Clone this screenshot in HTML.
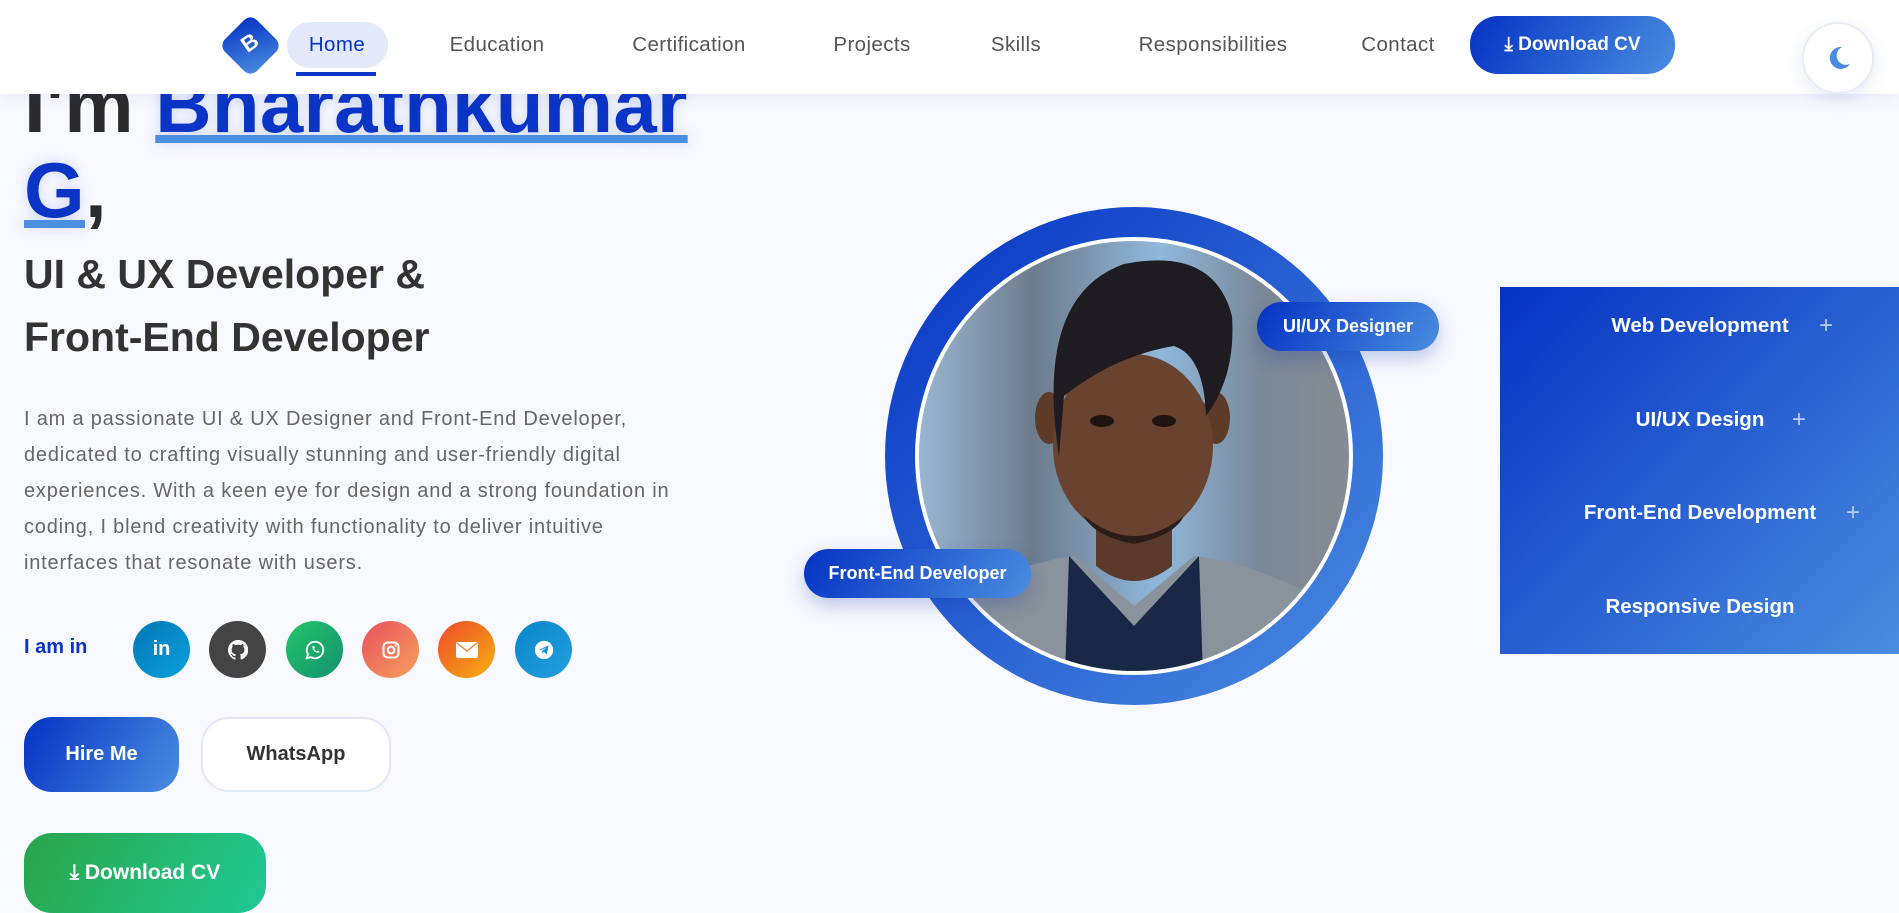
<!DOCTYPE html>
<html><head><meta charset="utf-8"><style>
*{margin:0;padding:0;box-sizing:border-box}
body{width:1899px;height:904px;overflow:hidden;background:#f8f9fe;font-family:"Liberation Sans",sans-serif;position:relative}
.abs{position:absolute}
nav{position:absolute;left:0;top:0;width:1899px;height:94px;background:#fff;box-shadow:0 4px 14px rgba(60,80,160,.08);z-index:5}
.ni{position:absolute;top:33px;font-size:20.5px;color:#555;transform:translateX(-50%);white-space:nowrap;letter-spacing:.4px}
.grad{background:linear-gradient(120deg,#0532c2,#4a8de0)}
h1{position:absolute;left:24px;top:63px;font-size:78px;line-height:85px;font-weight:700;color:#2b2b2b;z-index:1}
h1 .n{color:#0a34c6;letter-spacing:.3px;text-decoration:underline;text-decoration-color:#4a8fe0;text-decoration-thickness:8px;text-underline-offset:3px;text-shadow:0 0 12px rgba(80,110,220,.25)}
h2{position:absolute;left:24px;top:243px;font-size:41px;line-height:63px;font-weight:700;color:#333}
p.d{position:absolute;left:24px;top:401px;width:680px;font-size:20px;letter-spacing:.8px;line-height:36px;color:#666}
.ic{position:absolute;top:621px;width:57px;height:57px;border-radius:50%;color:#fff;display:flex;align-items:center;justify-content:center;font-weight:700}
.btn{position:absolute;border-radius:28px;display:flex;align-items:center;justify-content:center;font-weight:700;font-size:20px}
.badge{position:absolute;height:49px;border-radius:25px;color:#fff;font-size:18px;font-weight:700;display:flex;align-items:center;justify-content:center;box-shadow:0 8px 18px rgba(20,50,160,.25)}
.sk{position:absolute;color:#fff;font-size:20.5px;font-weight:700;transform:translate(-50%,-50%);white-space:nowrap}
.pl{position:absolute;color:#b9cdf5;font-size:24px;transform:translate(-50%,-50%)}
</style></head><body>
<nav>
 <div class="abs grad" style="left:228px;top:23px;width:45px;height:45px;border-radius:9px;transform:rotate(45deg)"></div>
 <div class="abs" style="left:238px;top:30px;width:24px;text-align:center;color:#fff;font-weight:700;font-size:22px;transform:rotate(-35deg)">B</div>
 <div class="abs" style="left:287px;top:22px;width:101px;height:46px;border-radius:23px;background:#e3e9f8"></div>
 <div class="abs" style="left:296px;top:72px;width:80px;height:4px;background:#0a34c6"></div>
 <div class="ni" style="left:337px;color:#0a34c6">Home</div>
 <div class="ni" style="left:497px">Education</div>
 <div class="ni" style="left:689px">Certification</div>
 <div class="ni" style="left:872px">Projects</div>
 <div class="ni" style="left:1016px">Skills</div>
 <div class="ni" style="left:1213px">Responsibilities</div>
 <div class="ni" style="left:1398px">Contact</div>
 <div class="btn grad" style="left:1470px;top:16px;width:205px;height:58px;color:#fff;font-size:19px">⤓ Download CV</div>
 <div class="abs" style="left:1802px;top:22px;width:72px;height:72px;border-radius:50%;background:#fff;border:2px solid #e8ecf8;box-shadow:0 6px 16px rgba(60,80,160,.12)"></div>
 <svg class="abs" style="left:1824px;top:44px" width="28" height="28" viewBox="0 0 28 28"><path d="M18 3a11 11 0 1 0 8 17a9 9 0 0 1-8-17z" fill="#4a8be0"/></svg>
</nav>
<h1>I'm <span class="n">Bharathkumar</span><br><span class="n">G</span>,</h1>
<h2>UI &amp; UX Developer &amp;<br>Front-End Developer</h2>
<p class="d">I am a passionate UI &amp; UX Designer and Front-End Developer, dedicated to crafting visually stunning and user-friendly digital experiences. With a keen eye for design and a strong foundation in coding, I blend creativity with functionality to deliver intuitive interfaces that resonate with users.</p>
<div class="abs" style="left:24px;top:636px;font-size:20px;font-weight:700;color:#0a34c6">I am in</div>
<div class="ic" style="left:133px;background:linear-gradient(135deg,#0277b5,#0aa0dc);font-size:20px">in</div>
<div class="ic" style="left:209px;background:#444"><svg width="20" height="20" viewBox="0 0 16 16"><path fill="#fff" d="M8 0a8 8 0 0 0-2.5 15.6c.4 0 .5-.2.5-.4v-1.4c-2.2.5-2.7-1-2.7-1-.4-.9-.9-1.2-.9-1.2-.7-.5.1-.5.1-.5.8.1 1.2.8 1.2.8.7 1.3 1.9.9 2.3.7.1-.5.3-.9.5-1.1-1.8-.2-3.6-.9-3.6-4 0-.9.3-1.6.8-2.1-.1-.2-.4-1 .1-2.1 0 0 .7-.2 2.2.8a7.5 7.5 0 0 1 4 0c1.5-1 2.2-.8 2.2-.8.4 1.1.2 1.9.1 2.1.5.6.8 1.3.8 2.1 0 3.1-1.9 3.8-3.6 4 .3.3.6.8.6 1.5v2.2c0 .2.1.5.6.4A8 8 0 0 0 8 0z"/></svg></div>
<div class="ic" style="left:286px;background:linear-gradient(135deg,#25c56a,#12906e)"><svg width="22" height="22" viewBox="0 0 24 24"><path d="M12 3a9 9 0 0 0-7.7 13.6L3 21l4.5-1.2A9 9 0 1 0 12 3z" fill="none" stroke="#fff" stroke-width="2"/><path d="M9 8c0 4 3 7 7 7l1-1.5-2-1-1 1c-1.5-.5-2.5-1.5-3-3l1-1-1-2z" fill="#fff"/></svg></div>
<div class="ic" style="left:362px;background:linear-gradient(135deg,#e8505f,#f7a05a)"><svg width="20" height="20" viewBox="0 0 24 24"><rect x="3" y="3" width="18" height="18" rx="5" fill="none" stroke="#fff" stroke-width="2.4"/><circle cx="12" cy="12" r="4" fill="none" stroke="#fff" stroke-width="2.4"/><circle cx="17.5" cy="6.5" r="1.3" fill="#fff"/></svg></div>
<div class="ic" style="left:438px;background:linear-gradient(135deg,#ec4a2a,#f8b010)"><svg width="22" height="18" viewBox="0 0 22 16"><rect width="22" height="16" rx="2" fill="#fff"/><path d="M1 1l10 8 10-8" fill="none" stroke="#f08030" stroke-width="1.3"/></svg></div>
<div class="ic" style="left:515px;background:linear-gradient(135deg,#0a85c9,#22a0dc)"><svg width="22" height="22" viewBox="0 0 24 24"><circle cx="12" cy="12" r="10" fill="#fff"/><path d="M6 12l11-5-2 10-3-3-2 2v-3l5-4-6 3z" fill="#1593d4"/></svg></div>
<div class="btn grad" style="left:24px;top:717px;width:155px;height:75px;color:#fff">Hire Me</div>
<div class="btn" style="left:201px;top:717px;width:190px;height:75px;color:#333;background:#fff;border:2px solid #e2e8f8">WhatsApp</div>
<div class="btn" style="left:24px;top:833px;width:242px;height:80px;color:#fff;background:linear-gradient(120deg,#2aa54a,#20c995);font-size:21px">⤓ Download CV</div>

<svg class="abs" style="left:884px;top:206px" width="500" height="500" viewBox="0 0 500 500">
<defs>
<linearGradient id="rg" x1="0" y1="0" x2="1" y2="1"><stop offset="0" stop-color="#0634c4"/><stop offset="1" stop-color="#4a8ce0"/></linearGradient>
<linearGradient id="bg" x1="0" y1="0" x2="1" y2="0"><stop offset="0" stop-color="#a8c8e8"/><stop offset=".3" stop-color="#6c7c8c"/><stop offset=".55" stop-color="#90b8dc"/><stop offset=".75" stop-color="#7a8898"/><stop offset="1" stop-color="#8a8c90"/></linearGradient>
<clipPath id="cp"><circle cx="250" cy="250" r="215"/></clipPath>
</defs>
<circle cx="250" cy="250" r="249" fill="url(#rg)"/>
<circle cx="250" cy="250" r="219" fill="#fff"/>
<g clip-path="url(#cp)">
<rect width="500" height="500" fill="url(#bg)"/>
<path d="M60 500 L85 380 Q150 355 190 350 L250 400 L310 350 Q360 355 420 385 L440 500z" fill="#8a929c"/>
<path d="M185 350 L250 420 L315 350 L320 500 L180 500z" fill="#1a2848"/>
<path d="M212 300 L212 360 Q250 390 288 360 L288 300z" fill="#5a3a2a"/>
<ellipse cx="165" cy="212" rx="14" ry="26" fill="#5e3a28"/>
<ellipse cx="332" cy="212" rx="14" ry="26" fill="#5e3a28"/>
<ellipse cx="249" cy="240" rx="80" ry="92" fill="#6a4230"/>
<path d="M175 250 Q150 90 240 58 Q330 40 348 110 Q352 170 322 210 Q320 150 290 140 Q230 150 180 190z" fill="#1e1c20"/>
<path d="M200 310 Q250 350 300 310 Q290 330 250 338 Q210 330 200 310z" fill="#2a1c18"/>
<ellipse cx="218" cy="215" rx="12" ry="6" fill="#201410"/>
<ellipse cx="280" cy="215" rx="12" ry="6" fill="#201410"/>
</g>
</svg>
<div class="badge grad" style="left:1257px;top:302px;width:182px">UI/UX Designer</div>
<div class="badge grad" style="left:804px;top:549px;width:227px">Front-End Developer</div>

<div class="abs" style="left:1500px;top:287px;width:399px;height:367px;background:linear-gradient(135deg,#0532c2,#4a8de0)"></div>
<div class="sk" style="left:1700px;top:326px">Web Development</div><div class="pl" style="left:1826px;top:326px">+</div>
<div class="sk" style="left:1700px;top:420px">UI/UX Design</div><div class="pl" style="left:1799px;top:420px">+</div>
<div class="sk" style="left:1700px;top:513px">Front-End Development</div><div class="pl" style="left:1853px;top:513px">+</div>
<div class="sk" style="left:1700px;top:607px">Responsive Design</div>
</body></html>
